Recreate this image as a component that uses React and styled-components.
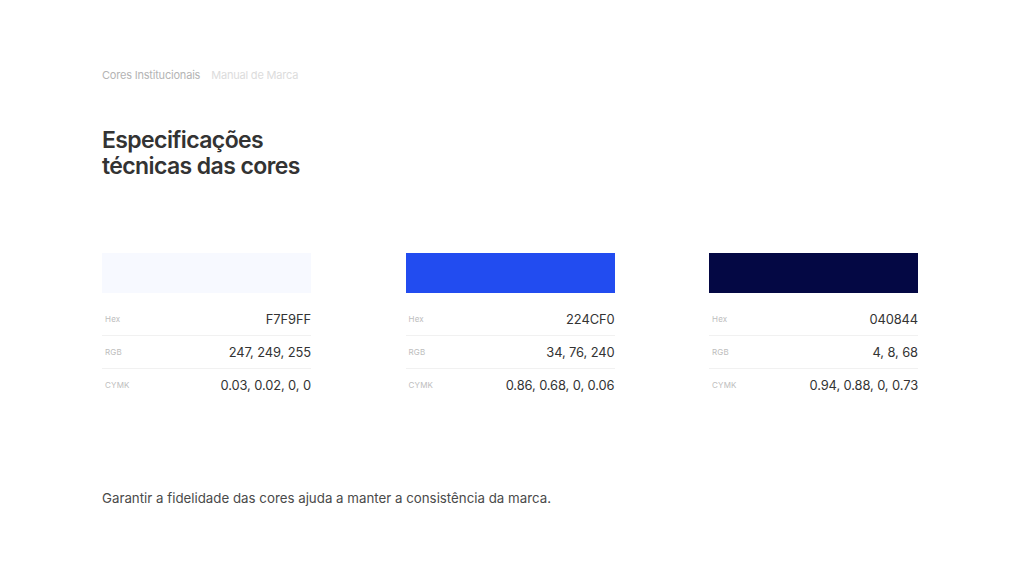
import styled, { createGlobalStyle } from "styled-components";

const GlobalStyle = createGlobalStyle`
    html, body {
        margin: 0;
        padding: 0;
        background: #fff;
    }
    body {
        font-family: Inter, "Noto Sans", sans-serif;
        -webkit-font-smoothing: antialiased;
    }
`;

const Page = styled.main`
    width: 1024px;
    height: 576px;
    box-sizing: border-box;
    padding: 68px 106px 0 102px;
    display: flex;
    flex-direction: column;
`;

const Crumbs = styled.nav`
    display: flex;
    gap: 11px;
    font-size: 11px;
    letter-spacing: -0.2px;
    line-height: 15px;
`;

const Crumb = styled.span`
    color: ${(p) => (p.$muted ? "#dcdcdc" : "#b4b4b4")};
`;

const Title = styled.h1`
    margin: 44px 0 0;
    font-size: 23px;
    line-height: 26px;
    font-weight: 600;
    letter-spacing: -0.6px;
    color: #333;
`;

const Grid = styled.section`
    margin-top: 74px;
    display: grid;
    grid-template-columns: repeat(3, 209px);
    justify-content: space-between;
`;

const Card = styled.div`
    display: flex;
    flex-direction: column;
`;

const Swatch = styled.div`
    height: 40px;
    background: ${(p) => p.$color};
    margin-bottom: 10px;
`;

const Row = styled.div`
    display: flex;
    align-items: center;
    justify-content: space-between;
    height: 33px;
    border-bottom: 1px solid ${(p) => (p.$last ? "transparent" : "#f1f1f1")};
    box-sizing: border-box;
`;

const Label = styled.span`
    padding-left: 3px;
    font-size: 8px;
    color: #bdbdbd;
    letter-spacing: 0.2px;
`;

const Value = styled.span`
    font-size: 12.9px;
    color: #333;
    letter-spacing: -0.1px;
`;

const Footer = styled.p`
    margin: 88px 0 0;
    font-size: 13.3px;
    color: #4a4a4a;
    letter-spacing: 0;
`;

const colors = [
    { color: "#F7F9FF", hex: "F7F9FF", rgb: "247, 249, 255", cymk: "0.03, 0.02, 0, 0" },
    { color: "#224CF0", hex: "224CF0", rgb: "34, 76, 240", cymk: "0.86, 0.68, 0, 0.06" },
    { color: "#040844", hex: "040844", rgb: "4, 8, 68", cymk: "0.94, 0.88, 0, 0.73" },
];

export default function App() {
    return (
        <>
            <GlobalStyle />
            <Page>
                <Crumbs>
                    <Crumb>Cores Institucionais</Crumb>
                    <Crumb $muted>Manual de Marca</Crumb>
                </Crumbs>
                <Title>
                    Especificações
                    <br />
                    técnicas das cores
                </Title>
                <Grid>
                    {colors.map((c) => (
                        <Card key={c.hex}>
                            <Swatch $color={c.color} />
                            <Row>
                                <Label>Hex</Label>
                                <Value>{c.hex}</Value>
                            </Row>
                            <Row>
                                <Label>RGB</Label>
                                <Value>{c.rgb}</Value>
                            </Row>
                            <Row $last>
                                <Label>CYMK</Label>
                                <Value>{c.cymk}</Value>
                            </Row>
                        </Card>
                    ))}
                </Grid>
                <Footer>Garantir a fidelidade das cores ajuda a manter a consistência da marca.</Footer>
            </Page>
        </>
    );
}
